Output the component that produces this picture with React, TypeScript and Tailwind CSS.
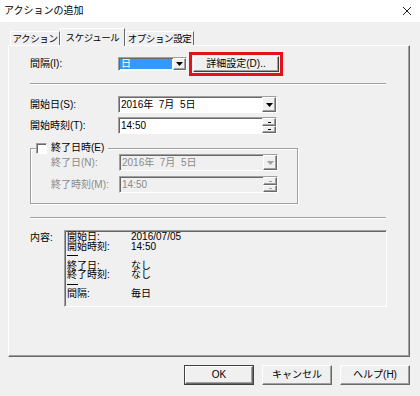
import React from "react";

const raised =
  "border border-white border-r-[#696969] border-b-[#696969] shadow-[inset_-1px_-1px_0_#a0a0a0] bg-[#f0f0f0]";
const sunken =
  "border border-[#a0a0a0] border-r-white border-b-white shadow-[inset_1px_1px_0_#696969]";
const etched = "border border-[#a0a0a0] shadow-[1px_1px_0_#ffffff,inset_1px_1px_0_#ffffff]";

function Down({ disabled = false }: { disabled?: boolean }) {
  return (
    <svg width="7" height="4" viewBox="0 0 7 4">
      <path d="M0 0H7L3.5 4Z" fill={disabled ? "#a0a0a0" : "#000"} />
    </svg>
  );
}

function DateField({ value, disabled = false }: { value: string; disabled?: boolean }) {
  return (
    <div className={`${sunken} w-[159px] h-[17px] flex items-center ${disabled ? "bg-[#f0f0f0] text-[#8a8a8a]" : "bg-white text-black"}`}>
      <span className="pl-[2px] flex-1 leading-none whitespace-pre">{value}</span>
      <div className={`${raised} w-[14px] h-[15px] flex items-center justify-center`}>
        <Down disabled={disabled} />
      </div>
    </div>
  );
}

function SpinField({ value, disabled = false }: { value: string; disabled?: boolean }) {
  return (
    <div className={`${sunken} w-[159px] h-[17px] flex items-center ${disabled ? "bg-[#f0f0f0] text-[#8a8a8a]" : "bg-white text-black"}`}>
      <span className="pl-[2px] flex-1 leading-none">{value}</span>
      <div className="flex flex-col w-[14px] h-[15px]">
        <div className={`${raised} h-[8px] flex items-center justify-center`}>
          <div className={`w-[3px] h-[1px] ${disabled ? "bg-[#a0a0a0]" : "bg-black"}`} />
        </div>
        <div className={`${raised} h-[7px] flex items-center justify-center`}>
          <div className={`w-[3px] h-[1px] ${disabled ? "bg-[#a0a0a0]" : "bg-black"}`} />
        </div>
      </div>
    </div>
  );
}

function Separator() {
  return <div className="w-[356px] h-[2px] border-t border-[#a0a0a0] border-b border-b-white" />;
}

const tab = "border border-white border-b-0 border-r-[#696969] flex items-center justify-center leading-none whitespace-nowrap text-[9.5px] tracking-[-0.4px]";

export default function App() {
  return (
    <div className="w-[420px] h-[396px] bg-[#f0f0f0] text-[10px] text-black font-['Liberation_Sans','Noto_Sans_CJK_JP',sans-serif] overflow-hidden flex flex-col">
      {/* Title bar */}
      <div className="h-[22px] bg-white flex items-center justify-between pl-[4px] pr-[8px]">
        <span className="text-[10px] leading-none">アクションの追加</span>
        <svg width="10" height="10" viewBox="0 0 10 10">
          <path d="M1 1L9 9M9 1L1 9" stroke="#222" strokeWidth="1" />
        </svg>
      </div>

      {/* Tabs */}
      <div className="mt-[6px] pl-[10px] h-[17px] flex items-end relative z-10">
        <div className={`${tab} w-[50px] h-[14px]`}>アクション</div>
        <div className={`${tab} w-[65px] h-[18px] -mb-[1px] bg-[#f0f0f0]`}>スケジュール</div>
        <div className={`${tab} w-[69px] h-[14px]`}>オプション設定</div>
      </div>

      {/* Panel */}
      <div className="ml-[8px] w-[402px] h-[312px] border border-white border-r-[#696969] border-b-[#696969] shadow-[inset_-1px_-1px_0_#a0a0a0] pl-[21px] flex flex-col">
        {/* Interval row */}
        <div className="mt-[6px] h-[24px] flex items-center">
          <div className="w-[88px] leading-none">間隔(I):</div>
          <div className={`${sunken} bg-white w-[69px] h-[14px] flex items-center`}>
            <div className="flex-1 h-[10px] ml-[1px] mr-[1px] bg-[#3399ff] text-white leading-[10px] pl-[1px]">日</div>
            <div className={`${raised} w-[13px] h-[12px] flex items-center justify-center`}>
              <Down />
            </div>
          </div>
          <div className="ml-[2px] border-[3px] border-[#e3121b] p-[1px]">
            <div className="w-[86px] h-[16px] border border-white border-r-[#404040] border-b-[#404040] shadow-[inset_-1px_-1px_0_#a0a0a0] bg-[#f0f0f0] flex items-center justify-center leading-none">
              詳細設定(D)..
            </div>
          </div>
        </div>

        <div className="mt-[7px]">
          <Separator />
        </div>

        <div className="mt-[11px] flex items-center h-[17px]">
          <div className="w-[88px] leading-none">開始日(S):</div>
          <DateField value="2016年  7月  5日" />
        </div>
        <div className="mt-[4px] flex items-center h-[17px]">
          <div className="w-[88px] leading-none">開始時刻(T):</div>
          <SpinField value="14:50" />
        </div>

        {/* Group box */}
        <div className={`relative mt-[14px] w-[268px] h-[56px] ${etched}`}>
          <div className="absolute -top-[7px] left-[5px] bg-[#f0f0f0] pr-[4px] flex items-center gap-[4px] h-[12px]">
            <div className={`${sunken} w-[11px] h-[11px] bg-white`} />
            <span className="leading-none">終了日時(E)</span>
          </div>
          <div className="pt-[5px] flex items-center h-[22px]">
            <div className="w-[88px] pl-[20px] leading-none text-[#8a8a8a]">終了日(N):</div>
            <DateField value="2016年  7月  5日" disabled />
          </div>
          <div className="mt-[5px] flex items-center h-[17px]">
            <div className="w-[88px] pl-[20px] leading-none text-[#8a8a8a]">終了時刻(M):</div>
            <SpinField value="14:50" disabled />
          </div>
        </div>

        <div className="mt-[13px]">
          <Separator />
        </div>

        {/* Content */}
        <div className="mt-[11px] flex">
          <div className="w-[34px] pt-[3px] leading-none">内容:</div>
          <div className={`${sunken} w-[323px] h-[77px] pl-[2px] pt-[1px] text-[10px] leading-[9.5px]`}>
            {[
              ["開始日:", "2016/07/05"],
              ["開始時刻:", "14:50"],
              ["-", ""],
              ["終了日:", "なし"],
              ["終了時刻:", "なし"],
              ["-", ""],
              ["間隔:", "毎日"],
            ].map(([k, v], i) => (
              <div key={i} className="flex h-[9.5px] items-center">
                {k === "-" ? (
                  <div className="w-[11px] h-[1px] bg-black" />
                ) : (
                  <>
                    <span className="w-[64px]">{k}</span>
                    <span>{v}</span>
                  </>
                )}
              </div>
            ))}
          </div>
        </div>
      </div>

      {/* Buttons */}
      <div className="mt-[8px] pr-[10px] flex justify-end gap-[8px]">
        <div className="w-[70px] h-[20px] border border-[#404040] flex">
          <div className={`${raised} flex-1 flex items-center justify-center leading-none`}>OK</div>
        </div>
        <div className={`${raised} w-[70px] h-[20px] flex items-center justify-center leading-none`}>キャンセル</div>
        <div className={`${raised} w-[70px] h-[20px] flex items-center justify-center leading-none`}>ヘルプ(H)</div>
      </div>
    </div>
  );
}
